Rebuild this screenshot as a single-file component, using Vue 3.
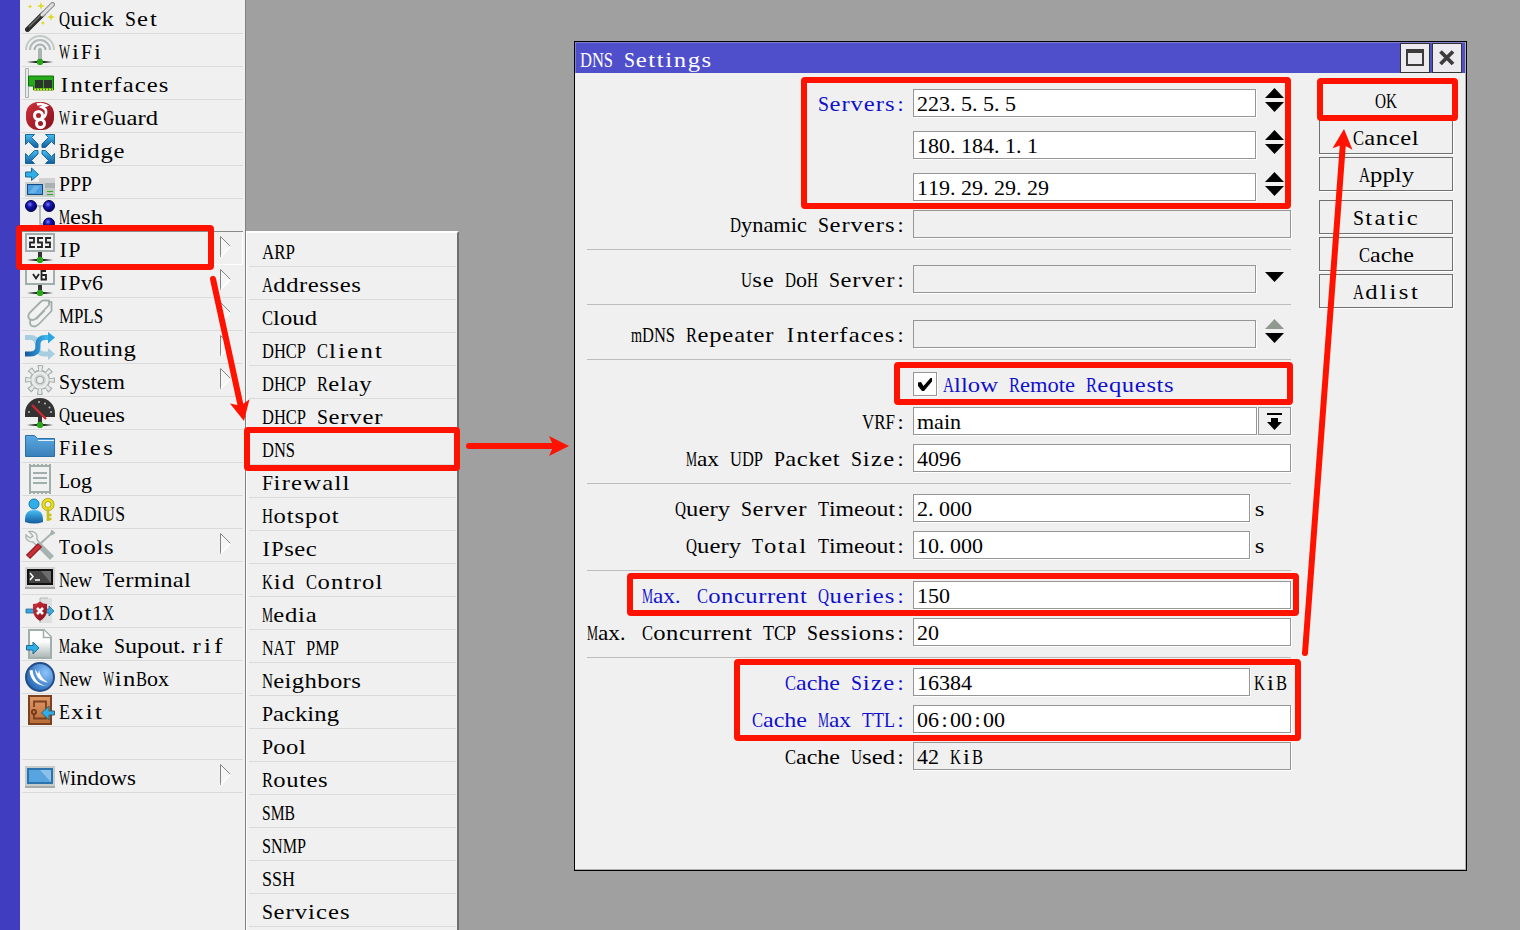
<script setup>
import { h } from 'vue'

const CELL = 11
const ctx = document.createElement('canvas').getContext('2d')
ctx.font = '22px "Liberation Serif"'
ctx.fontKerning = 'none'

// Splits a string into runs and fits every run to a fixed-pitch cell grid.
function runs(text) {
  return (text.match(/[A-Z]+|[a-z]+|\d+|\s+|./g) || []).map((t) => {
    const target = t.length * CELL
    const natural = ctx.measureText(t).width
    const style = { width: target + 'px' }
    if (natural > target + 1) {
      style.transform = `scaleX(${(target / natural).toFixed(4)})`
    } else if (t.trim()) {
      const scale = /[a-z]/.test(t) ? Math.min(1.12, Math.max(1, target / natural)) : 1
      const gap = (target / scale - natural) / t.length
      if (scale > 1) style.transform = `scaleX(${scale.toFixed(4)})`
      style.letterSpacing = gap.toFixed(3) + 'px'
      style.textIndent = (t === '.' ? 0 : gap / 2).toFixed(3) + 'px'
    }
    return { t, style }
  })
}
const Mono = (props) =>
  h('span', { class: 'mono' }, runs(props.text).map((r) => h('span', { class: 'run', style: r.style }, r.t)))
Mono.props = ['text']

const menu = [
  { name: 'Quick Set', icon: 'wand' },
  { name: 'WiFi', icon: 'wifi' },
  { name: 'Interfaces', icon: 'nic' },
  { name: 'WireGuard', icon: 'wg' },
  { name: 'Bridge', icon: 'bridge' },
  { name: 'PPP', icon: 'ppp' },
  { name: 'Mesh', icon: 'mesh' },
  { name: 'IP', icon: 'ip', sub: true, open: true },
  { name: 'IPv6', icon: 'ipv6', sub: true },
  { name: 'MPLS', icon: 'mpls', sub: true },
  { name: 'Routing', icon: 'routing', sub: true },
  { name: 'System', icon: 'gear', sub: true },
  { name: 'Queues', icon: 'gauge' },
  { name: 'Files', icon: 'folder' },
  { name: 'Log', icon: 'log' },
  { name: 'RADIUS', icon: 'radius' },
  { name: 'Tools', icon: 'tools', sub: true },
  { name: 'New Terminal', icon: 'terminal' },
  { name: 'Dot1X', icon: 'dot1x' },
  { name: 'Make Supout.rif', icon: 'supout' },
  { name: 'New WinBox', icon: 'winbox' },
  { name: 'Exit', icon: 'exit' },
  { name: '', icon: '' },
  { name: 'Windows', icon: 'windows', sub: true },
]
const submenu = ['ARP', 'Addresses', 'Cloud', 'DHCP Client', 'DHCP Relay', 'DHCP Server', 'DNS', 'Firewall', 'Hotspot', 'IPsec',
  'Kid Control', 'Media', 'NAT PMP', 'Neighbors', 'Packing', 'Pool', 'Routes', 'SMB', 'SNMP', 'SSH', 'Services']

const groups = [
  [
    { label: 'Servers:', value: '223.5.5.5', blue: true, end: 'updown', loose: true },
    { label: '', value: '180.184.1.1', end: 'updown', loose: true },
    { label: '', value: '119.29.29.29', end: 'updown' },
    { label: 'Dynamic Servers:', value: '', ro: true },
  ],
  [{ label: 'Use DoH Server:', value: '', ro: true, end: 'down' }],
  [{ label: 'mDNS Repeater Interfaces:', value: '', ro: true, end: 'updim' }],
  [
    { check: 'Allow Remote Requests' },
    { label: 'VRF:', value: 'main', end: 'drop' },
    { label: 'Max UDP Packet Size:', value: '4096' },
  ],
  [
    { label: 'Query Server Timeout:', value: '2.000', unit: 's' },
    { label: 'Query Total Timeout:', value: '10.000', unit: 's' },
  ],
  [
    { label: 'Max. Concurrent Queries:', value: '150', blue: true },
    { label: 'Max. Concurrent TCP Sessions:', value: '20' },
  ],
  [
    { label: 'Cache Size:', value: '16384', unit: 'KiB', blue: true },
    { label: 'Cache Max TTL:', value: '06:00:00', blue: true },
    { label: 'Cache Used:', value: '42 KiB', ro: true },
  ],
]
const actions = [['OK', 'Cancel', 'Apply'], ['Static', 'Cache', 'Adlist']]

const frames = [
  [16, 225, 214, 270], [244, 427, 460, 471], [801, 77, 1291, 209], [1317, 78, 1458, 121],
  [894, 362, 1293, 405], [627, 573, 1299, 616], [734, 659, 1301, 741],
]
const arrows = [[213, 279, 244, 421], [469, 446, 569, 446], [1305, 653, 1344, 129]].map(([x1, y1, x2, y2]) => ({
  len: Math.hypot(x2 - x1, y2 - y1),
  at: `translate(${x2} ${y2}) rotate(${(Math.atan2(y2 - y1, x2 - x1) * 180) / Math.PI})`,
}))
</script>

<template>
  <div class="desktop">
    <svg class="defs" width="0" height="0">
      <defs>
        <linearGradient id="gb" x1="0" y1="0" x2="0" y2="1"><stop offset="0" stop-color="#45c0f5" /><stop offset="1" stop-color="#155a9c" /></linearGradient>
        <linearGradient id="gx" x1="0" y1="0" x2="1" y2="0"><stop offset="0" stop-color="#15559c" /><stop offset="1" stop-color="#40bdf5" /></linearGradient>
        <linearGradient id="gf" x1="0" y1="0" x2="0" y2="1"><stop offset="0" stop-color="#5aa8e2" /><stop offset="1" stop-color="#3a80b8" /></linearGradient>
        <linearGradient id="gg" x1="0" y1="0" x2="1" y2="0"><stop offset="0" stop-color="#111" stop-opacity="0" /><stop offset=".35" stop-color="#222" /><stop offset=".65" stop-color="#222" /><stop offset="1" stop-color="#111" stop-opacity="0" /></linearGradient>
        <linearGradient id="gp" x1="0" y1="0" x2="0" y2="1"><stop offset=".4" stop-color="#fff" /><stop offset="1" stop-color="#a8b4b2" /></linearGradient>
        <radialGradient id="gn" cx=".4" cy=".35" r=".6"><stop offset="0" stop-color="#7c7cf0" /><stop offset=".45" stop-color="#1414b0" /><stop offset="1" stop-color="#050568" /></radialGradient>
        <linearGradient id="gr" x1="0" y1="0" x2="1" y2="1"><stop offset="0" stop-color="#d0303a" /><stop offset="1" stop-color="#85101e" /></linearGradient>
        <radialGradient id="gw" cx=".7" cy=".35" r=".8"><stop offset="0" stop-color="#8cc4fa" /><stop offset="1" stop-color="#1a5cae" /></radialGradient>
        <linearGradient id="gd" x1="0" y1="0" x2="0" y2="1"><stop offset="0" stop-color="#e09a68" /><stop offset="1" stop-color="#b86c38" /></linearGradient>
      </defs>
    </svg>

    <div class="rail"></div>
    <nav class="sidebar">
      <div v-for="(m, i) in menu" :key="i" class="item" :class="{ open: m.open }">
        <svg class="icon" viewBox="0 0 30 30">
          <template v-if="m.icon === 'wand'">
            <path d="M2.500 27.500L18 12" stroke="#2c2c2c" stroke-width="5" stroke-linecap="round" />
            <path d="M4 25L17 12" stroke="#777" stroke-width="1.200" />
            <path d="M18 12L27.500 2.500" stroke="#909090" stroke-width="5" stroke-linecap="round" />
            <path d="M17 13L27.500 2.500" stroke="#e0e0e0" stroke-width="2.600" stroke-linecap="round" />
            <path d="M16 0l1 3 3 1-3 1-1 3-1-3-3-1 3-1zM26 11l1 3 3 1-3 1-1 3-1-3-3-1 3-1zM5 2.500l.8 1.200 1.200.8-1.200.8L5 6.500l-.8-1.200L3 4.500l1.200-.8zM18 19l.8 1.200 1.200.8-1.200.8-.8 1.200-.8-1.200-1.200-.8 1.200-.8z" fill="#ded820" />
          </template>
          <template v-if="m.icon === 'wifi'">
            <g fill="none" stroke-width="2"><path d="M1 15A14 14 0 0 1 29 15" stroke="#c3cbca" /><path d="M5 15A10 10 0 0 1 25 15" stroke="#b0bab8" /><path d="M9.500 15A5.500 5.500 0 0 1 20.500 15" stroke="#a3afad" /></g>
            <path d="M13 14q2-3 4 0v12h-4z" fill="#a9b5b3" />
            <path d="M2 26h26v2H2z" fill="url(#gg)" /><circle cx="15" cy="27" r="3.200" fill="#28a818" />
          </template>
          <template v-if="m.icon === 'nic'">
            <path d="M.5.5h3v29h-3z" fill="#e6e9e8" stroke="#a6b2b0" />
            <path d="M3.500 8h25v14h-20v-4h-5z" fill="#28a81c" stroke="#0c7008" />
            <path d="M10 12h8v8h-8zM19 12h8v8h-8z" fill="#2c352c" /><path d="M9 21.500h19" stroke="#d8d820" stroke-width="2" stroke-dasharray="2 1" />
          </template>
          <template v-if="m.icon === 'wg'">
            <rect x="1" y="1" width="28" height="28" rx="12" fill="url(#gr)" />
            <g fill="none" stroke="#fff"><circle cx="13.500" cy="14.500" r="4" stroke-width="3" /><circle cx="15.500" cy="22.500" r="4" stroke-width="3" /><path d="M12 3.500q4-1.500 9 1l-4 1.500q5 2 4 6.500-1 4-4.500 5.500" stroke-width="2.600" /></g>
          </template>
          <template v-if="m.icon === 'bridge'">
            <g fill="url(#gb)" stroke="#1a6796" stroke-width="1">
              <path d="M.5.5h9l-3 3L13 10v3.500H9.500L3.500 7.500l-3 3z" /><path d="M29.500.5h-9l3 3L17 10v3.500h3.500l6-6 3 3z" />
              <path d="M.5 29.500h9l-3-3L13 20v-3.500H9.500L3.500 22.500l-3-3z" /><path d="M29.500 29.500h-9l3-3L17 20v-3.500h3.500l6 6 3-3z" />
            </g>
          </template>
          <template v-if="m.icon === 'ppp'">
            <path d="M14 11h16v5H14z" fill="#d2d2d2" /><path d="M20 16h10v14H20z" fill="#a9b2b0" /><path d="M20 21h10v9H20z" fill="#c4cac8" /><path d="M0 15h20v15H0z" fill="#c9cfce" /><path d="M22 24.500h6M22 27.500h6" stroke="#2eb020" stroke-width="1.200" />
            <rect x="2.500" y="17.500" width="15" height="10" fill="#4aa0e0" stroke="#164a80" /><path d="M4 26l5-7h6l-5 7z" fill="#8cc5f0" opacity=".5" />
            <path d="M.5 5h6V1l7 6.500-7 6V10h-6z" fill="#30aee8" stroke="#1c6c96" />
          </template>
          <template v-if="m.icon === 'mesh'">
            <path d="M6 6h18M15 6v18h10" fill="none" stroke="#a6b2b0" stroke-width="1.600" />
            <g fill="url(#gn)" stroke="#05055a"><circle cx="6" cy="6" r="5.500" /><circle cx="24" cy="6" r="5.500" /><circle cx="24" cy="23.500" r="5.500" /></g>
          </template>
          <template v-if="m.icon === 'ip' || m.icon === 'ipv6'">
            <rect x="1" y="1" width="28" height="17" fill="#f2f2f2" stroke="#a2aeac" stroke-width="2" /><path d="M13 19h4v7h-4z" fill="#333" />
            <path d="M2 26h26v2H2z" fill="url(#gg)" /><circle cx="15" cy="27" r="3.200" fill="#28a818" />
            <path v-if="m.icon === 'ip'" d="M4 5h5v4.500H5V14h5M18 5h-5v4.500h4V14h-5M26 5h-5v4.500h4V14h-5" fill="none" stroke="#222" stroke-width="1.800" />
            <path v-else d="M8 8l3 4.500L14 8M21 5h-4.500v8.500H21V9h-4.500" fill="none" stroke="#222" stroke-width="1.800" />
          </template>
          <template v-if="m.icon === 'mpls'">
            <g fill="#f2f2f2" stroke="#a2aeac" stroke-width="1.800" stroke-linejoin="round"><path d="M6 20L21 3h5.500v9L14 25q-4 4-8 1.500-2-3 0-6.500z" /><path d="M4.500 14L16 2.500Q18 1 20.500 1.500H24V6L11 19.500q-4 3-7 0-1.500-3 .5-5.500z" /><path d="M11 20l8.500-8.500" fill="none" /></g>
          </template>
          <template v-if="m.icon === 'routing'">
            <path d="M0 5.500h5q7 0 7.500 7v3q.5 6.500 7 6.500h4" fill="none" stroke="#a8cce0" stroke-width="5" /><path d="M23 16l7 6-7 6z" fill="#a8cce0" />
            <path d="M0 22h5q7.500 0 8-6.500v-3.500q.5-6.500 7-6.500h3.500" fill="none" stroke="url(#gx)" stroke-width="5" /><path d="M23 0l7 5.500-7 6z" fill="#2ca4e0" />
          </template>
          <template v-if="m.icon === 'gear'">
            <circle cx="15" cy="15" r="12" fill="none" stroke="#a2aeac" stroke-width="6" stroke-dasharray="5 4.425" stroke-dashoffset="2.500" />
            <circle cx="15" cy="15" r="9.500" fill="#e8ebea" stroke="#a2aeac" stroke-width="1.400" />
            <circle cx="15" cy="15" r="11.500" fill="none" stroke="#e8ebea" stroke-width="4.800" stroke-dasharray="2.900 6.132" stroke-dashoffset="1.450" />
            <circle cx="15" cy="15" r="5.800" fill="#cbd2d0" /><circle cx="15" cy="15" r="3.500" fill="#f0f0f0" stroke="#a2aeac" stroke-width="1.200" />
          </template>
          <template v-if="m.icon === 'gauge'">
            <path d="M0 19V15A15 15 0 0 1 30 15v4z" fill="#333" /><path d="M7 7L21 21" stroke="#cc2830" stroke-width="2.400" />
            <g fill="#bbb"><circle cx="4" cy="14" r="1" /><circle cx="14" cy="4" r="1" /><circle cx="20" cy="5.500" r="1" /><circle cx="24.500" cy="9.500" r="1" /><circle cx="26" cy="14" r="1" /></g>
            <path d="M13 19h4v7h-4z" fill="#333" /><path d="M2 26h26v2H2z" fill="url(#gg)" /><circle cx="15" cy="27" r="3.200" fill="#28a818" />
          </template>
          <template v-if="m.icon === 'folder'">
            <path d="M.5 4.500h9l3 3h17v18H.5z" fill="url(#gf)" stroke="#2b70a6" /><path d="M13 9.500h16" stroke="#e4f2fc" />
          </template>
          <template v-if="m.icon === 'log'">
            <path d="M5 2h20v26H5z" fill="#f0f2f1" stroke="#a2aeac" stroke-width="2" /><path d="M4 1h22M4 29h22" stroke="#a2aeac" stroke-width="2" stroke-dasharray="2 2" />
            <path d="M8 9h14M8 14h14M8 19h14" stroke="#a2aeac" stroke-width="2" />
          </template>
          <template v-if="m.icon === 'radius'">
            <circle cx="9" cy="7" r="5" fill="#30aee8" stroke="#1c78b0" /><path d="M0 25v-3q0-9 9-9t9 9v3q-9 3-18 0z" fill="url(#gb)" />
            <circle cx="23" cy="7.500" r="4.500" fill="none" stroke="#a8a010" stroke-width="4" /><circle cx="23" cy="7.500" r="4.500" fill="none" stroke="#e8e020" stroke-width="2.400" /><path d="M23 12v12M24 18h2.500M24 22h2.500" stroke="#c8c018" stroke-width="2.600" />
          </template>
          <template v-if="m.icon === 'tools'">
            <path d="M14 15L27 28" stroke="#a6b2b0" stroke-width="5.500" /><path d="M4 1.500q6-1 8 4v4l3 4-3 2.500-4-4q-5 0-7-4V5l4 3 3-2z" fill="#f0f0f0" stroke="#a6b2b0" stroke-width="1.300" />
            <path d="M15 14L26 4l1-3 2 2-3 1.500" fill="none" stroke="#a6b2b0" stroke-width="2" /><path d="M3 27L15 15" stroke="#901820" stroke-width="6" /><path d="M3.500 26.500L14.500 15.500" stroke="#c83038" stroke-width="3.600" />
          </template>
          <template v-if="m.icon === 'terminal'">
            <path d="M0 4h30v20H0z" fill="#d4d4d4" /><path d="M0 24h30v2H0z" fill="#a8a8a8" /><rect x="3" y="7" width="24" height="14" fill="#444" stroke="#111" stroke-width="2" /><path d="M26 8v12L16 8z" fill="#888" opacity=".6" />
            <path d="M5 10l3 3.500-3 3.500M10 17h5" fill="none" stroke="#fff" stroke-width="1.500" />
          </template>
          <template v-if="m.icon === 'dot1x'">
            <path d="M15 2h12v25H15z" fill="#d4d8d7" opacity=".7" /><path d="M15 27V2h8" fill="none" stroke="#b0b8b6" />
            <path d="M1 13h8v4H1zM20 13h4v-3l5 5-5 5v-3h-4z" fill="#38a8e0" stroke="#226c96" stroke-width=".8" />
            <path d="M8 8q4 0 7-2.500Q18 8 22 8v6q0 7-7 11-7-4-7-11z" fill="url(#gr)" /><path d="M12 12l6 6M18 12l-6 6" stroke="#fff" stroke-width="2.600" />
          </template>
          <template v-if="m.icon === 'supout'">
            <path d="M4 1h15l7 7v21H4z" fill="url(#gp)" stroke="#a2aeac" stroke-width="2" /><path d="M18.500 1v7.500H26" fill="#fff" stroke="#a2aeac" stroke-width="1.600" />
            <path d="M1.500 16.500H8V13l6 6-6 6v-4H1.500z" fill="#30aee8" stroke="#1c6c96" />
          </template>
          <template v-if="m.icon === 'winbox'">
            <circle cx="15" cy="15" r="14" fill="url(#gw)" stroke="#244c86" stroke-width="2" />
            <path d="M4.500 8.500Q6 24 23 24q-8-.5-12.500-7Q8 13 7.500 8zM10 7q1 12 13 13.500Q15 15.500 14 8l-.8 4z" fill="#fff" />
          </template>
          <template v-if="m.icon === 'exit'">
            <rect x="4" y="1" width="22" height="28" fill="url(#gd)" stroke="#7a4020" stroke-width="2" /><path d="M9 12V6.500h12V23.500H9V20" fill="none" stroke="#7a4020" stroke-width="1.800" /><circle cx="9" cy="17" r="2.200" fill="#b87040" stroke="#6a3418" stroke-width="1.500" />
            <path d="M29.500 16H24v-5l-7.500 7 7.500 7v-5h5.500z" fill="#30aee8" stroke="#4a5a58" />
          </template>
          <template v-if="m.icon === 'windows'">
            <path d="M0 5h30v20H0z" fill="#c6cccb" /><path d="M0 25h30v2H0z" fill="#a8acab" /><rect x="3" y="8" width="24" height="14" fill="#58a4e0" stroke="#2c74ac" stroke-width="2" /><path d="M26 9v12L15 9z" fill="#b0d4f0" opacity=".6" />
          </template>
        </svg>
        <Mono :text="m.name" />
        <svg v-if="m.sub" class="chevron" viewBox="0 0 11 21"><path d="M.5 21V.5L10.500 10.500z" fill="#f6f6f6" /><path d="M.5 21V.5l10 10" fill="none" stroke="#858585" /><path d="M10.500 10.500L.8 20.500" fill="none" stroke="#fff" stroke-width="1.400" /></svg>
      </div>
    </nav>

    <nav class="submenu">
      <div v-for="s in submenu" :key="s" class="subitem"><Mono :text="s" /></div>
    </nav>

    <section class="window">
      <header class="titlebar">
        <Mono text="DNS Settings" />
        <div class="controls">
          <span class="ctl"><svg width="28" height="28" viewBox="0 0 28 28"><rect x="6" y="7" width="16" height="14" fill="none" stroke="#3c3c3c" stroke-width="2" /><path d="M5 5h18v4H5z" fill="#3c3c3c" /></svg></span>
          <span class="ctl"><svg width="28" height="28" viewBox="0 0 28 28"><path d="M7.500 7.500l12.500 12.500M20 7.500L7.500 20" stroke="#3c3c3c" stroke-width="3.800" /></svg></span>
        </div>
      </header>
      <div class="body">
        <div class="form">
          <div v-for="(g, gi) in groups" :key="gi" class="group">
            <div v-for="(f, fi) in g" :key="fi" class="row" :class="{ loose: f.loose, checkrow: f.check }">
              <span class="label" :class="{ blue: f.blue }"><Mono v-if="f.label" :text="f.label" /></span>
              <template v-if="f.check">
                <span class="box"><svg width="22" height="22" viewBox="0 0 22 22"><path d="M4 9.500l3-.5 2.500 4L16.500 5H18v3.500L10 18H8l-4-5z" fill="#000" /></svg></span>
                <span class="blue"><Mono :text="f.check" /></span>
              </template>
              <template v-else>
                <span class="input" :class="{ ro: f.ro }"><Mono v-if="f.value" :text="f.value" /></span>
                <span v-if="f.unit" class="unit"><Mono :text="f.unit" /></span>
                <span v-else-if="f.end === 'drop'" class="drop"><svg width="31" height="26" viewBox="0 0 31 26"><path d="M8 5h15v2H8zM12 10h7v4h4l-7.500 8L8 14h4z" fill="#000" /></svg></span>
                <span v-else-if="f.end" class="spin"><svg width="19" height="24" viewBox="0 0 19 24">
                  <path v-if="f.end !== 'down'" d="M0 10L9.500 0 19 10z" :class="{ dim: f.end === 'updim' }" />
                  <path v-if="f.end !== 'down'" d="M0 14h19L9.500 24z" /><path v-else d="M0 8h19l-9.500 10z" />
                </svg></span>
              </template>
            </div>
          </div>
        </div>
        <div class="actions">
          <div v-for="(g, i) in actions" :key="i" class="stack"><span v-for="a in g" :key="a" class="btn"><Mono :text="a" /></span></div>
        </div>
      </div>
    </section>

    <svg class="marks" width="1520" height="930" viewBox="0 0 1520 930">
      <rect v-for="(r, i) in frames" :key="i" :x="r[0] + 3" :y="r[1] + 3" :width="r[2] - r[0] - 6" :height="r[3] - r[1] - 6" rx="1" />
      <g v-for="(a, i) in arrows" :key="'a' + i" :transform="a.at">
        <line :x1="-a.len" y1="0" x2="-12" y2="0" /><path d="M0 0L-20 -10L-15.500 0L-20 10z" />
      </g>
    </svg>
  </div>
</template>

<style>
html, body { margin: 0; overflow: hidden; }
.mono { display: inline-block; white-space: nowrap; font: 22px/28px "Liberation Serif", "Noto Sans CJK SC", serif; font-kerning: none; height: 28px; vertical-align: top; text-align: left; }
.run { display: inline-block; white-space: pre; transform-origin: 0 50%; vertical-align: top; }
</style>

<style scoped>
.desktop { position: relative; width: 1520px; height: 930px; overflow: hidden; background: #a0a0a0; display: flex; align-items: flex-start; color: #000; }
.defs { position: absolute; }
.rail { width: 20px; height: 930px; background: #403dc0; flex: none; }
.sidebar { box-sizing: border-box; width: 226px; height: 930px; flex: none; background: #f0f0f0; border-right: 1px solid #808080; padding: 1px 2px 0 2px; }
.item { box-sizing: border-box; height: 33px; border-bottom: 1px solid #dadada; display: flex; align-items: flex-start; padding: 1px 0 0 3px; position: relative; }
.item.open { border-bottom-color: #fff; border-right: 1px solid #fff; box-shadow: 0 -1px 0 #8a8a8a; }
.icon { width: 30px; height: 30px; margin-right: 4px; flex: none; }
.item .mono { margin-top: 3px; }
.chevron { width: 11px; height: 21px; position: absolute; left: 198px; top: 4px; }
.submenu { box-sizing: border-box; width: 213px; height: 720px; margin-top: 231px; flex: none; background: #f0f0f0; border: 2px solid #fff; border-left-width: 1px; border-right-color: #707070; padding: 1px 1px 0 2px; }
.subitem { box-sizing: border-box; height: 33px; border-bottom: 1px solid #dadada; padding: 4px 0 0 13px; }
.window { position: absolute; box-sizing: border-box; left: 574px; top: 41px; width: 893px; height: 830px; background: #f0f0f0; border: 1px solid #000; box-shadow: inset -1px -1px 0 #b0b0b0; }
.titlebar { height: 31px; box-sizing: border-box; margin-right: 1px; background: #4f4fcc; border-top: 1px solid #8080cc; border-left: 1px solid #8080cc; color: #fff; display: flex; justify-content: space-between; padding: 0 3px 0 4px; }
.titlebar .mono { margin-top: 3px; }
.controls { display: flex; gap: 2px; }
.ctl { box-sizing: border-box; width: 30px; height: 30px; border: 1px solid #333; background: #ece9ef; }
.ctl svg { display: block; }
.body { display: flex; align-items: flex-start; justify-content: space-between; padding: 16px 13px 0 12px; }
.form { width: 704px; }
.group { display: flex; flex-direction: column; gap: 9px; padding-bottom: 11px; margin-bottom: 15px; border-bottom: 1px solid #bdbdbd; }
.group:nth-child(3) { margin-bottom: 12px; }
.group:nth-child(4), .group:nth-child(5), .group:nth-child(6) { margin-bottom: 10px; }
.group:last-child { border: 0; }
.row { display: flex; height: 28px; }
.row.loose { margin-bottom: 5px; }
.row.checkrow { height: 26px; }
.label { width: 319px; margin-right: 7px; flex: none; white-space: nowrap; display: flex; justify-content: flex-end; }
.blue { color: #1010cc; }
.row .mono { margin-top: 1px; }
.row.checkrow .mono { margin-top: -1px; }
.input { box-sizing: border-box; height: 28px; flex: 1; background: #fff; border: 1px solid #969696; box-shadow: 1px 1px 0 #fff; padding-left: 3px; min-width: 0; }
.row .input .mono { margin-top: 0; }
.input.ro { background: #f0f0f0; }
.unit { width: 41px; padding-left: 4px; box-sizing: border-box; flex: none; }
.drop { box-sizing: border-box; width: 33px; height: 28px; margin-left: 1px; border: 1px solid #969696; box-shadow: 1px 1px 0 #fff; flex: none; }
.drop svg, .spin svg, .box svg { display: block; }
.spin { width: 27px; margin-left: 9px; margin-right: -1px; margin-top: -1px; flex: none; }
.dim { fill: #909890; }
.box { box-sizing: border-box; width: 24px; height: 24px; border: 1px solid #969696; background: #fff; box-shadow: 1px 1px 0 #fff; margin-right: 6px; }
.actions { width: 134px; margin-top: -6px; }
.stack { display: flex; flex-direction: column; gap: 3px; margin-bottom: 9px; }
.btn { box-sizing: border-box; height: 34px; border: 1px solid #707070; box-shadow: 1px 1px 0 #fff; text-align: center; padding-top: 3px; }
.marks { position: absolute; left: 0; top: 0; pointer-events: none; }
.marks rect, .marks line { fill: none; stroke: #ff1200; stroke-width: 6; stroke-linecap: round; stroke-linejoin: round; }
.marks path { fill: #ff1200; }
</style>
